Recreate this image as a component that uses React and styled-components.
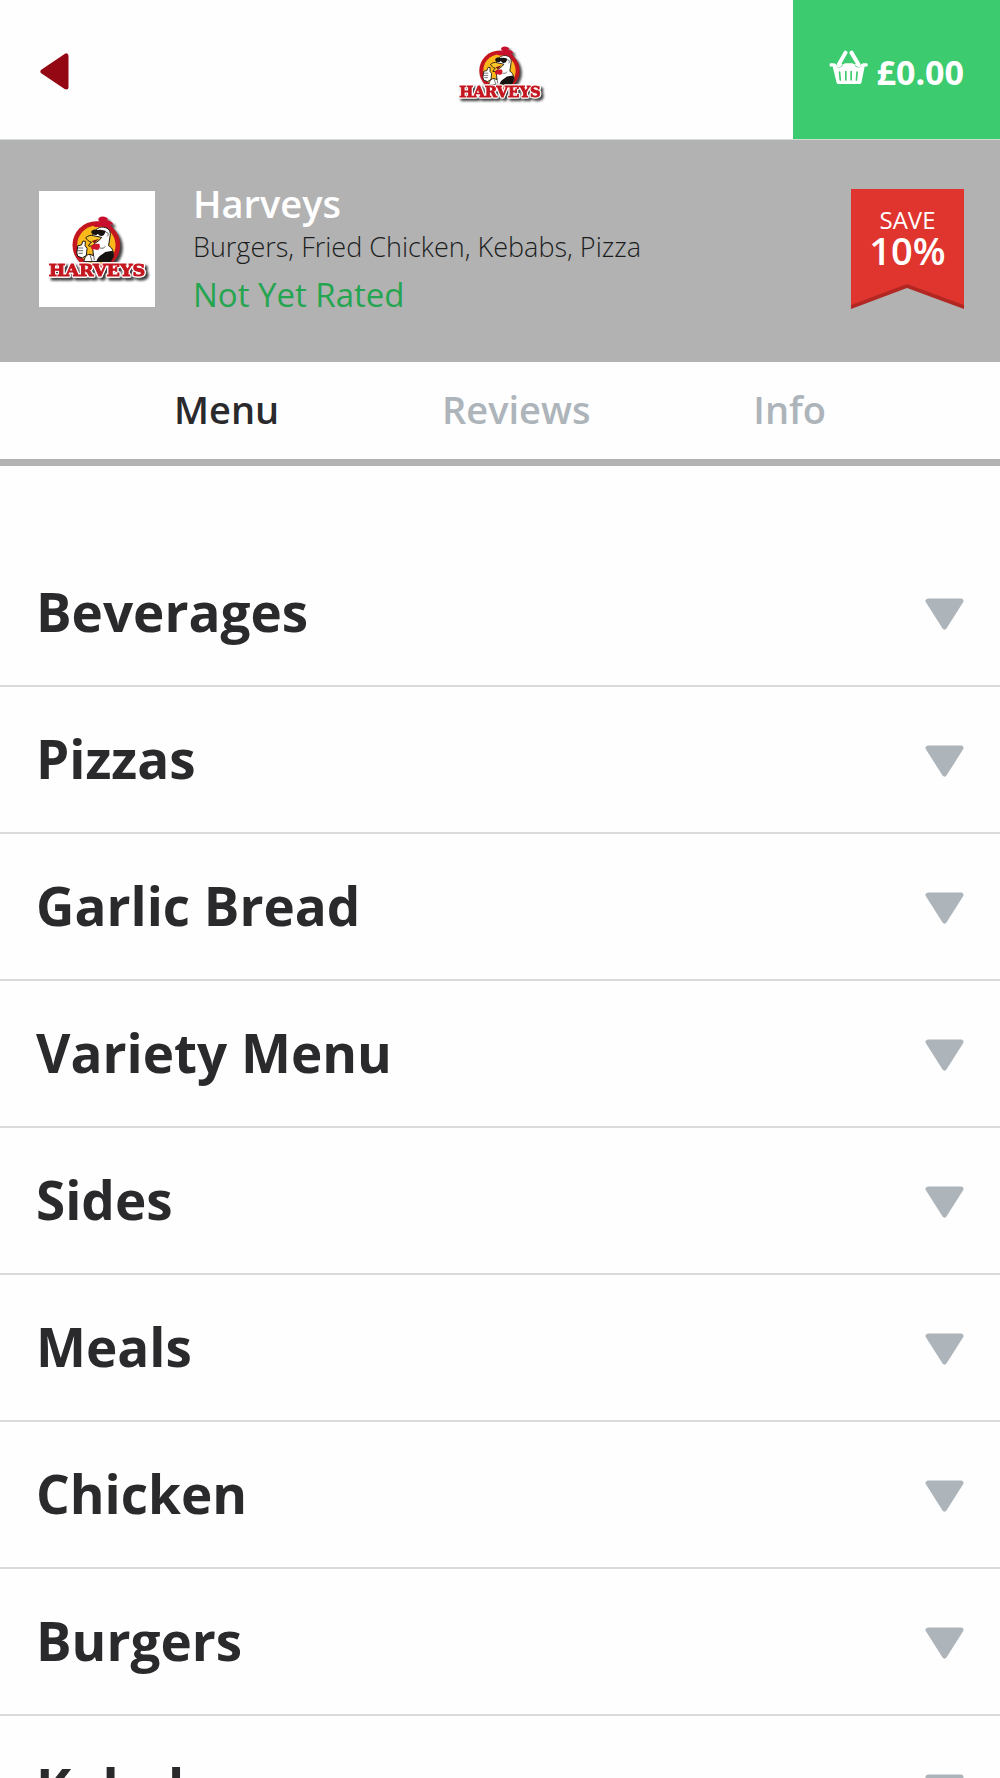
import React, { useState } from "react";
import styled, { createGlobalStyle } from "styled-components";

const GlobalStyle = createGlobalStyle`
  *,
  *::before,
  *::after {
    box-sizing: border-box;
  }

  body {
    margin: 0;
    background: #fefefe;
    color: #2a2a2c;
    font-family: "Open Sans", sans-serif;
  }
`;

const Wrapper = styled.div`
  width: 100%;
  min-height: 100vh;
`;

const PlainButton = styled.button`
  margin: 0;
  padding: 0;
  border: 0;
  background: none;
  color: inherit;
  font: inherit;
  cursor: pointer;
`;

const Header = styled.header`
  display: grid;
  grid-template-columns: 1fr auto 1fr;
  height: 140px;
  border-bottom: 1px solid #d4dcd6;
`;

const BackButton = styled(PlainButton)`
  justify-self: start;
  display: flex;
  align-items: center;
  padding: 3px 40px 0;
`;

const HomeLink = styled.a`
  display: flex;
  align-items: center;
  padding-top: 8px;
`;

const BasketButton = styled(PlainButton)`
  justify-self: end;
  display: flex;
  align-items: center;
  padding: 4px 36px 0;
  background: #3ccb6e;
  color: #ffffff;
`;

const BasketContent = styled.span`
  display: flex;
  align-items: baseline;
  gap: 9px;
  font-size: 34px;
  font-weight: 700;
  line-height: 44px;
`;

const Hero = styled.section`
  display: flex;
  align-items: center;
  gap: 38px;
  padding: 41px 36px 45px 39px;
  background: #b2b2b2;
`;

const LogoBox = styled.div`
  display: flex;
  flex: none;
  background: #ffffff;
`;

const HeroInfo = styled.div`
  flex: 1;
  min-width: 0;
`;

const HeroName = styled.h1`
  margin: 0;
  color: #ffffff;
  font-size: 38px;
  font-weight: 600;
  line-height: 44px;
`;

const Cuisines = styled.p`
  margin: 0 0 4px;
  color: #1c1e1e;
  font-size: 27px;
  font-weight: 300;
  line-height: 44px;
`;

const Rating = styled.p`
  margin: 0;
  color: #25a550;
  font-size: 33px;
  font-weight: 400;
  line-height: 44px;
`;

const Badge = styled.div`
  display: grid;
  flex: none;
  width: 113px;
  height: 120px;

  > * {
    grid-area: 1 / 1;
  }
`;

const BadgeText = styled.div`
  padding-top: 15px;
  color: #ffffff;
  text-align: center;
`;

const BadgeLabel = styled.div`
  font-size: 24px;
  font-weight: 500;
  line-height: 32px;
`;

const BadgeAmount = styled.div`
  font-size: 38px;
  font-weight: 600;
  line-height: 28px;
`;

const Tabs = styled.nav`
  display: flex;
  justify-content: space-between;
  height: 104px;
  padding: 0 174px;
  border-bottom: 7px solid #b2b2b2;
`;

const Tab = styled(PlainButton)`
  padding-bottom: 4px;
  color: ${props => (props.$active ? "#2a2a2c" : "#adb4ba")};
  font-size: 38px;
  font-weight: 600;
`;

const Categories = styled.ul`
  margin: 0;
  padding: 74px 0 0;
  list-style: none;
`;

const Category = styled.li`
  border-bottom: 2px solid #dadada;
`;

const CategoryButton = styled(PlainButton)`
  display: flex;
  align-items: center;
  justify-content: space-between;
  width: 100%;
  height: 145px;
  padding: 0 36px 2px;
  font-size: 53px;
  font-weight: 700;
`;

const Arrow = styled.svg`
  flex: none;
  margin-top: 4px;
  transform: ${props => (props.$open ? "rotate(180deg)" : "none")};
`;

const LogoArt = styled.g`
  filter: drop-shadow(8px 8px 4px rgba(0, 0, 0, 0.75));
`;

const LogoText = styled.text`
  fill: #c4161f;
  stroke: #c4161f;
  stroke-width: 3px;
  font-family: "DejaVu Serif", serif;
  font-size: 53px;
  font-weight: 700;
  text-anchor: middle;
  filter: drop-shadow(3px 0 0 #ffffff) drop-shadow(-3px 0 0 #ffffff)
    drop-shadow(0 -3px 0 #ffffff) drop-shadow(0 3px 0 #ffffff);
`;

const categories = [
  "Beverages",
  "Pizzas",
  "Garlic Bread",
  "Variety Menu",
  "Sides",
  "Meals",
  "Chicken",
  "Burgers",
  "Kebabs"
];

const tabs = ["Menu", "Reviews", "Info"];

const Logo = ({ size }) => (
  <svg
    width={size}
    height={size}
    viewBox="26 33 350 350"
    role="img"
    aria-label="Harveys"
  >
    <LogoArt>
      <circle cx="199" cy="196" r="72" fill="#c4161f" />
      <circle cx="199" cy="196" r="58" fill="#fbb81a" />
      {/* body */}
      <path
        d="M186 176c2-22 18-36 34-34 18 2 24 14 20 30l-4 26c12 6 16 20 14 34l-10 14h-78c0-10 6-22 18-22l10 4z"
        fill="#ffffff"
        stroke="#171310"
        strokeWidth="3"
      />
      <path
        d="M199 246c6-20 18-20 27-29l22-4c5 10 3 24-6 34h-43z"
        fill="#171310"
      />
      <path d="M180 226l6 18M190 222l3 20" stroke="#171310" strokeWidth="2" />
      {/* comb */}
      <path
        d="M191 139c2-14 12-15 20-13-12-6-4-16 6-16 9 0 16 3 18 9-3 0-4 1-4 3 9 0 18 5 19 13l-11-2c8 6 10 13 8 20-8-8-17-13-27-13-12 0-21 4-29-1z"
        fill="#c8102e"
      />
      {/* beak */}
      <path
        d="M167 174c8-7 16-9 24-6l24 5c-6 10-16 14-23 20-4 5-11 9-17 5l9-11c-8-1-11-5-17-13z"
        fill="#fbc62b"
        stroke="#171310"
        strokeWidth="3"
      />
      <path d="M185 184l22-7-14 14z" fill="#7d1715" />
      <path
        d="M184 199c4-6 14-8 24-6 4 8 1 18-7 18-5 0-7-2-9-2-6 1-12-3-8-10z"
        fill="#d0142a"
      />
      {/* sunglasses */}
      <path
        d="M184 154c5-6 14-6 20-3 8-3 16-1 24 3l-6 12c-7 5-14 3-18-4-5 7-14 4-20-2z"
        fill="#171310"
      />
      <path
        d="M228 158c7-1 9 6 4 12M210 205c8 2 13 0 16-5"
        fill="none"
        stroke="#171310"
        strokeWidth="2"
      />
      {/* thumb up */}
      <path
        d="M143 198l11-2 5-12 7 1-1 13 6 8-2 21-12 8-14-5-3-10z"
        fill="#ffffff"
        stroke="#171310"
        strokeWidth="3"
      />
      <path
        d="M143 205h16M143 213h16M145 221h13"
        stroke="#171310"
        strokeWidth="2"
      />
      <LogoText x="201" y="289">
        HARVEYS
      </LogoText>
    </LogoArt>
  </svg>
);

const BasketIcon = () => (
  <svg width="39" height="35" viewBox="146 146 118 106" aria-hidden="true">
    <path
      d="M196 154L176 189M214 154L235 189"
      stroke="#ffffff"
      strokeWidth="12"
      strokeLinecap="round"
    />
    {/* gap between the handles and the rim */}
    <path
      d="M164 188c2 9 16 11 21 0M226 188c5 11 18 9 20 0"
      fill="none"
      stroke="#ffffff"
      strokeWidth="5"
    />
    <path
      d="M150 186h13c1 8 6 13 13 13 6 0 11-4 13-10l6-3h22l6 3c2 6 6 10 12 10 7 0 12-5 13-13h13c3 0 3 10 0 10h-7l-10 49c-1 3-3 4-6 4h-63c-3 0-5-1-6-4l-12-49h-7c-3 0-3-10 0-10z"
      fill="#ffffff"
    />
    <path
      d="M178 213l2 24M197 211v26M213 211v26M231 213l-2 24"
      stroke="#3ccb6e"
      strokeWidth="5"
      strokeLinecap="round"
    />
  </svg>
);

const App = () => {
  const [activeTab, setActiveTab] = useState("Menu");
  const [open, setOpen] = useState(null);

  return (
    <Wrapper>
      <GlobalStyle />
      <Header>
        <BackButton type="button" aria-label="Back">
          <svg width="29" height="37" viewBox="0 0 29 37" aria-hidden="true">
            <path
              d="M3 18.5L26 3v31z"
              fill="#930812"
              stroke="#930812"
              strokeWidth="5"
              strokeLinejoin="round"
            />
          </svg>
        </BackButton>
        <HomeLink href="#home">
          <Logo size={98} />
        </HomeLink>
        <BasketButton type="button" aria-label="Basket £0.00">
          <BasketContent>
            <BasketIcon />
            <span>£0.00</span>
          </BasketContent>
        </BasketButton>
      </Header>

      <Hero>
        <LogoBox>
          <Logo size={116} />
        </LogoBox>
        <HeroInfo>
          <HeroName>Harveys</HeroName>
          <Cuisines>Burgers, Fried Chicken, Kebabs, Pizza</Cuisines>
          <Rating>Not Yet Rated</Rating>
        </HeroInfo>
        <Badge>
          <svg width="113" height="120" viewBox="0 0 113 120" aria-hidden="true">
            <path d="M0 0h113v120L56 99 0 120z" fill="#b32723" />
            <path d="M0 0h113v116L56 95 0 116z" fill="#e0352f" />
          </svg>
          <BadgeText>
            <BadgeLabel>SAVE</BadgeLabel>
            <BadgeAmount>10%</BadgeAmount>
          </BadgeText>
        </Badge>
      </Hero>

      <Tabs>
        {tabs.map(tab => (
          <Tab
            key={tab}
            type="button"
            $active={tab === activeTab}
            onClick={() => setActiveTab(tab)}
          >
            {tab}
          </Tab>
        ))}
      </Tabs>

      <Categories>
        {categories.map(name => (
          <Category key={name}>
            <CategoryButton
              type="button"
              aria-expanded={open === name}
              onClick={() => setOpen(open === name ? null : name)}
            >
              {name}
              <Arrow
                $open={open === name}
                width="39"
                height="32"
                viewBox="0 0 39 32"
                aria-hidden="true"
              >
                <path
                  d="M3 3h33L19.5 29z"
                  fill="#adb4ba"
                  stroke="#adb4ba"
                  strokeWidth="5"
                  strokeLinejoin="round"
                />
              </Arrow>
            </CategoryButton>
          </Category>
        ))}
      </Categories>
    </Wrapper>
  );
};

export default App;
